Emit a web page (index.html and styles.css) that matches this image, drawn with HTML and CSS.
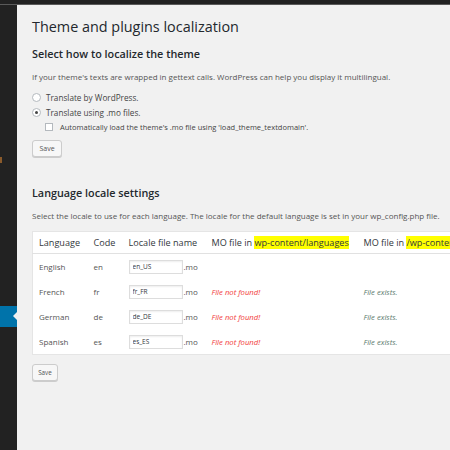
FILE: index.html
```html
<!DOCTYPE html>
<html>
<head>
<meta charset="utf-8">
<link rel="stylesheet" href="styles.css">
</head>
<body>
<div class="topbar"></div>
<div class="layout">
  <nav class="sidebar">
    <span class="side-mark"></span>
    <span class="side-current"></span>
  </nav>
  <main class="content">
    <h1 class="page-title">Theme and plugins localization</h1>
    <h2 class="section-title">Select how to localize the theme</h2>
    <p class="desc">If your theme's texts are wrapped in gettext calls. WordPress can help you display it multilingual.</p>
    <div class="options">
      <div class="option"><span class="radio"></span>Translate by WordPress.</div>
      <div class="option"><span class="radio checked"></span>Translate using .mo files.</div>
      <div class="suboption"><span class="checkbox"></span>Automatically load the theme's .mo file using 'load_theme_textdomain'.</div>
    </div>
    <button class="btn">Save</button>

    <h2 class="section-title second">Language locale settings</h2>
    <p class="desc">Select the locale to use for each language. The locale for the default language is set in your wp_config.php file.</p>
    <table class="locales">
      <colgroup>
        <col class="c-lang"><col class="c-code"><col class="c-file"><col class="c-mo1"><col class="c-mo2">
      </colgroup>
      <thead>
        <tr>
          <th>Language</th>
          <th>Code</th>
          <th>Locale file name</th>
          <th>MO file in <mark>wp-content/languages</mark></th>
          <th>MO file in <mark>/wp-content/themes/twentyfourteen/languages</mark></th>
        </tr>
      </thead>
      <tbody>
        <tr>
          <td>English</td><td>en</td>
          <td><input class="locale-input" type="text" value="en_US"><span class="ext">.mo</span></td>
          <td></td><td></td>
        </tr>
        <tr>
          <td>French</td><td>fr</td>
          <td><input class="locale-input" type="text" value="fr_FR"><span class="ext">.mo</span></td>
          <td class="notfound">File not found!</td><td class="exists">File exists.</td>
        </tr>
        <tr>
          <td>German</td><td>de</td>
          <td><input class="locale-input" type="text" value="de_DE"><span class="ext">.mo</span></td>
          <td class="notfound">File not found!</td><td class="exists">File exists.</td>
        </tr>
        <tr>
          <td>Spanish</td><td>es</td>
          <td><input class="locale-input" type="text" value="es_ES"><span class="ext">.mo</span></td>
          <td class="notfound">File not found!</td><td class="exists">File exists.</td>
        </tr>
      </tbody>
    </table>
    <button class="btn small">Save</button>
  </main>
</div>
</body>
</html>
```

FILE: styles.css
```css
html, body {
  margin: 0;
  overflow: hidden;
}
body {
  width: 450px;
  height: 450px;
  background: #f1f1f1;
  font-family: "Open Sans", sans-serif;
  color: #444;
}
.topbar {
  height: 4px;
  background: #222;
  border-bottom: 1px solid #5a5a5a;
}
.layout {
  display: flex;
  height: 445px;
}
.sidebar {
  width: 17px;
  flex: none;
  background: #222;
  display: flex;
  flex-direction: column;
}
.side-mark {
  margin-top: 152px;
  width: 2px;
  height: 6px;
  background: #8a5a2b;
}
.side-current {
  margin-top: 143px;
  height: 21px;
  background: #0073aa;
  position: relative;
}
.side-current::after {
  content: "";
  position: absolute;
  right: 0;
  top: 6px;
  border-top: 4px solid transparent;
  border-bottom: 4px solid transparent;
  border-right: 4px solid #f1f1f1;
}
.content {
  flex: 1;
  min-width: 0;
  padding-left: 15px;
}
.page-title {
  margin: 12px 0 0;
  font-size: 14.4px;
  font-weight: 400;
  line-height: 20px;
  color: #23282d;
}
.section-title {
  margin: 9px 0 0;
  font-size: 10.8px;
  font-weight: 600;
  line-height: 16px;
  color: #23282d;
}
.section-title.second {
  margin-top: 28px;
}
.desc {
  margin: 9px 0 0;
  font-size: 8px;
  line-height: 12px;
  color: #555;
  white-space: nowrap;
}
.options {
  margin-top: 7px;
}
.option {
  display: flex;
  align-items: center;
  height: 15px;
  gap: 5px;
  font-size: 8.2px;
  color: #444;
}
.radio {
  width: 9px;
  height: 9px;
  box-sizing: border-box;
  border: 1px solid #b4b9be;
  border-radius: 50%;
  background: #fff;
  display: flex;
  align-items: center;
  justify-content: center;
}
.radio.checked::before {
  content: "";
  width: 3px;
  height: 3px;
  border-radius: 50%;
  background: #444;
}
.suboption {
  display: flex;
  align-items: center;
  height: 14px;
  padding-left: 13px;
  gap: 7px;
  font-size: 7.5px;
  color: #444;
  white-space: nowrap;
}
.checkbox {
  width: 8px;
  height: 8px;
  box-sizing: border-box;
  border: 1px solid #b4b9be;
  background: #fff;
}
.btn {
  display: block;
  margin-top: 6px;
  width: 30px;
  height: 17px;
  padding: 0;
  font-family: "Open Sans", sans-serif;
  font-size: 7px;
  color: #555;
  background: #f7f7f7;
  border: 1px solid #ccc;
  border-radius: 3px;
  box-shadow: 0 1px 0 #ccc;
}
.btn.small {
  width: 26px;
  margin-top: 9px;
  font-size: 6.3px;
}
.locales {
  margin-top: 9px;
  width: 620px;
  table-layout: fixed;
  border-collapse: collapse;
  background: #fff;
  border: 1px solid #e5e5e5;
}
.c-lang { width: 55px; }
.c-code { width: 35px; }
.c-file { width: 83px; }
.c-mo1 { width: 152px; }
.c-mo2 { width: 295px; }
.locales th {
  height: 21px;
  padding: 0 0 0 6px;
  text-align: left;
  font-weight: 400;
  font-size: 9.1px;
  color: #32373c;
  border-bottom: 1px solid #e1e1e1;
  white-space: nowrap;
}
.locales td {
  height: 25px;
  padding: 0 0 0 6px;
  font-size: 8px;
  color: #555;
  white-space: nowrap;
}
mark {
  background: #ffff00;
  color: inherit;
}
.locale-input {
  width: 54px;
  height: 14px;
  box-sizing: border-box;
  margin: 0;
  padding: 0 3px;
  vertical-align: middle;
  border: 1px solid #ddd;
  box-shadow: inset 0 1px 2px rgba(0, 0, 0, 0.07);
  font-family: "Open Sans", sans-serif;
  font-size: 6.5px;
  color: #32373c;
  background: #fff;
}
.ext {
  vertical-align: middle;
  margin-left: 1px;
}
.locales td.notfound {
  color: #f23b3b;
  font-style: italic;
  font-size: 7.7px;
}
.locales td.exists {
  color: #5b7a6e;
  font-style: italic;
  font-size: 7.7px;
}
```
